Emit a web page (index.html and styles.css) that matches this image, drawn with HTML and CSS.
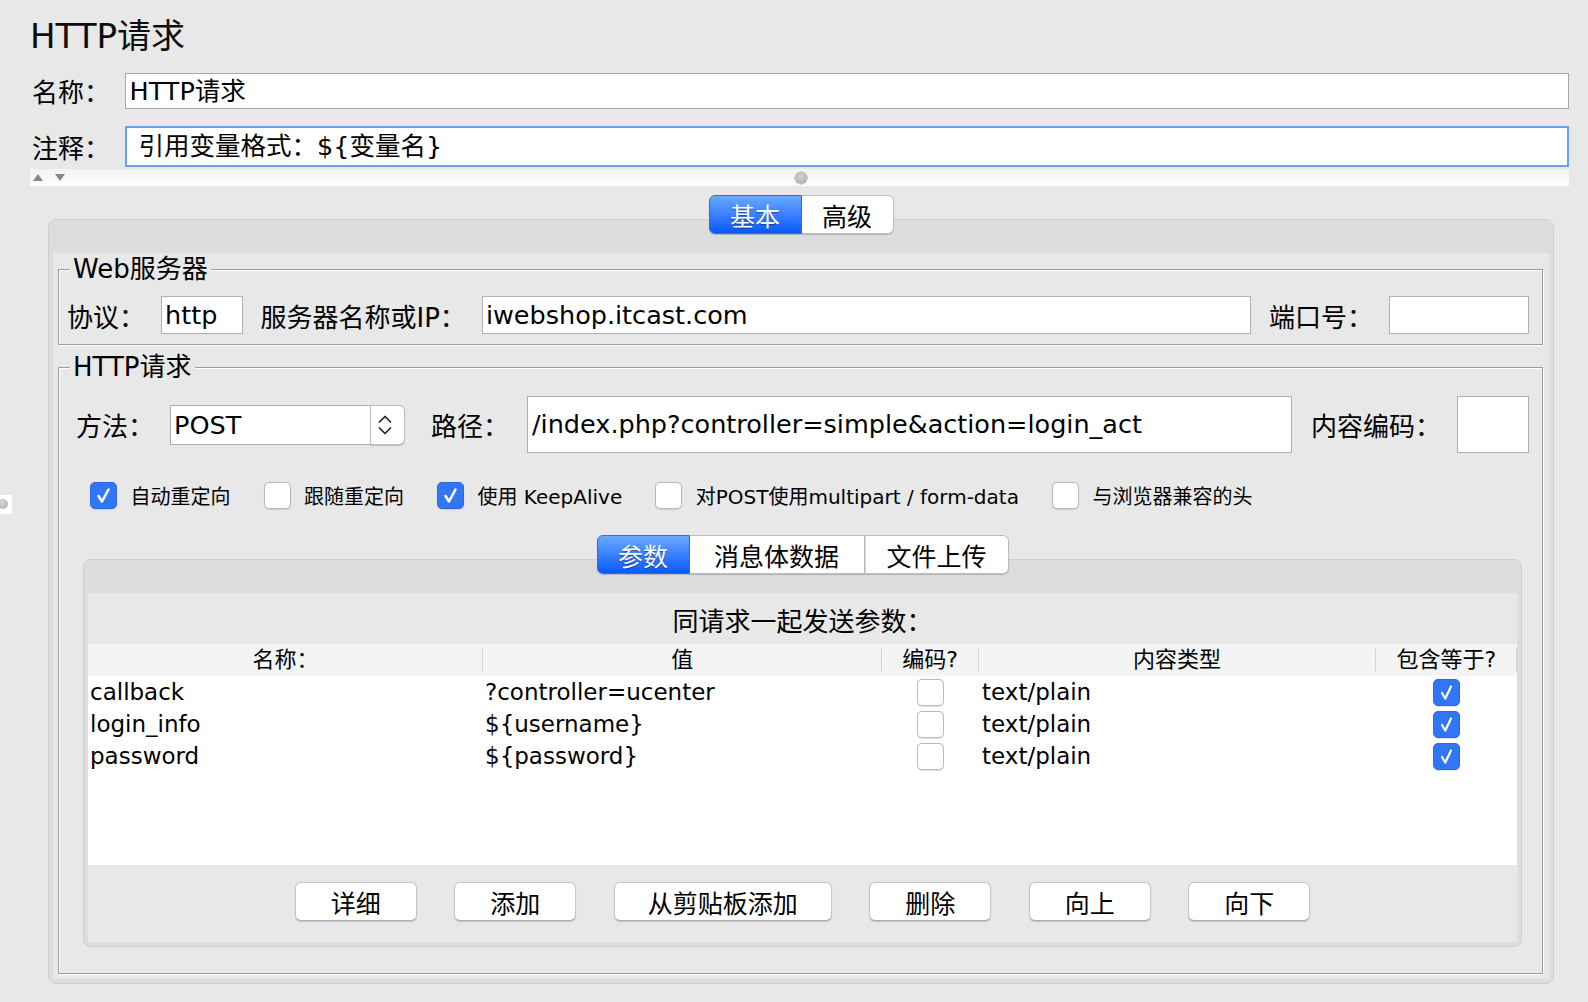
FILE: index.html
```html
<!DOCTYPE html>
<html lang="zh-CN">
<head>
<meta charset="utf-8">
<title>HTTP请求</title>
<link rel="stylesheet" href="styles.css">
</head>
<body>
<div class="lhandle"><span class="ldot"></span></div>

<div class="header">
  <h1 class="title">HTTP请求</h1>
  <div class="frow name-row">
    <span class="tlbl">名称：</span>
    <div class="tinput name-input">HTTP请求</div>
  </div>
  <div class="frow comment-row">
    <span class="tlbl">注释：</span>
    <div class="tinput comment-input">引用变量格式：${变量名}</div>
  </div>
  <div class="divider">
    <span class="tri up"></span>
    <span class="tri down"></span>
    <span class="knob"></span>
  </div>
</div>

<div class="tabpane outer">
  <div class="seg-tabs">
    <span class="seg active w93">基本</span><span class="seg w92">高级</span>
  </div>
  <div class="panel">
    <div class="pbody">
      <div class="tbox web">
        <span class="tbox-title">Web服务器</span>
        <div class="row row1">
          <span class="lbl">协议：</span>
          <div class="fld fld-proto">http</div>
          <span class="lbl">服务器名称或IP：</span>
          <div class="fld fld-server">iwebshop.itcast.com</div>
          <span class="lbl">端口号：</span>
          <div class="fld fld-port"></div>
        </div>
      </div>

      <div class="tbox http">
        <span class="tbox-title">HTTP请求</span>
        <div class="row row2">
          <span class="lbl">方法：</span>
          <div class="combo">
            <div class="combo-field">POST</div>
            <div class="combo-btn">
              <svg width="14" height="24" viewBox="0 0 14 24"><path d="M1.5 9 L7 3.5 L12.5 9" fill="none" stroke="#222" stroke-width="1.7" stroke-linecap="round" stroke-linejoin="round"/><path d="M1.5 15 L7 20.5 L12.5 15" fill="none" stroke="#222" stroke-width="1.7" stroke-linecap="round" stroke-linejoin="round"/></svg>
            </div>
          </div>
          <span class="lbl lbl-path">路径：</span>
          <div class="fld fld-path">/index.php?controller=simple&amp;action=login_act</div>
          <span class="lbl lbl-enc">内容编码：</span>
          <div class="fld fld-enc"></div>
        </div>

        <div class="checks">
          <span class="cb on"><svg width="27" height="27" viewBox="0 0 27 27"><path d="M8.5 14 L12 19.5 L18.5 7.5" fill="none" stroke="#fff" stroke-width="2.5" stroke-linecap="round" stroke-linejoin="round"/></svg></span>
          <span class="cbl">自动重定向</span>
          <span class="cb"></span>
          <span class="cbl">跟随重定向</span>
          <span class="cb on"><svg width="27" height="27" viewBox="0 0 27 27"><path d="M8.5 14 L12 19.5 L18.5 7.5" fill="none" stroke="#fff" stroke-width="2.5" stroke-linecap="round" stroke-linejoin="round"/></svg></span>
          <span class="cbl">使用 KeepAlive</span>
          <span class="cb"></span>
          <span class="cbl">对POST使用multipart / form-data</span>
          <span class="cb"></span>
          <span class="cbl">与浏览器兼容的头</span>
        </div>

        <div class="tabpane inner">
          <div class="seg-tabs">
            <span class="seg active w93">参数</span><span class="seg w175">消息体数据</span><span class="seg w144">文件上传</span>
          </div>
          <div class="panel">
            <div class="ibody">
              <div class="caption">同请求一起发送参数：</div>
              <div class="table">
                <div class="thead">
                  <span class="th">名称：</span>
                  <span class="th">值</span>
                  <span class="th">编码?</span>
                  <span class="th">内容类型</span>
                  <span class="th">包含等于?</span>
                </div>
                <div class="tr">
                  <span class="td">callback</span>
                  <span class="td">?controller=ucenter</span>
                  <span class="td c"><span class="cb"></span></span>
                  <span class="td ct">text/plain</span>
                  <span class="td c"><span class="cb on"><svg width="27" height="27" viewBox="0 0 27 27"><path d="M9 14 L12.3 19.5 L18 7.5" fill="none" stroke="#fff" stroke-width="2.2" stroke-linecap="round" stroke-linejoin="round"/></svg></span></span>
                </div>
                <div class="tr">
                  <span class="td">login_info</span>
                  <span class="td">${username}</span>
                  <span class="td c"><span class="cb"></span></span>
                  <span class="td ct">text/plain</span>
                  <span class="td c"><span class="cb on"><svg width="27" height="27" viewBox="0 0 27 27"><path d="M9 14 L12.3 19.5 L18 7.5" fill="none" stroke="#fff" stroke-width="2.2" stroke-linecap="round" stroke-linejoin="round"/></svg></span></span>
                </div>
                <div class="tr">
                  <span class="td">password</span>
                  <span class="td">${password}</span>
                  <span class="td c"><span class="cb"></span></span>
                  <span class="td ct">text/plain</span>
                  <span class="td c"><span class="cb on"><svg width="27" height="27" viewBox="0 0 27 27"><path d="M9 14 L12.3 19.5 L18 7.5" fill="none" stroke="#fff" stroke-width="2.2" stroke-linecap="round" stroke-linejoin="round"/></svg></span></span>
                </div>
              </div>
              <div class="btns">
                <span class="btn">详细</span>
                <span class="btn">添加</span>
                <span class="btn">从剪贴板添加</span>
                <span class="btn">删除</span>
                <span class="btn">向上</span>
                <span class="btn">向下</span>
              </div>
            </div>
          </div>
        </div>
      </div>
    </div>
  </div>
</div>
</body>
</html>
```

FILE: styles.css
```css
* { box-sizing: border-box; }
html, body { margin: 0; padding: 0; }
body {
  width: 1588px;
  height: 1002px;
  overflow: hidden;
  position: relative;
  background: #e8e8e8;
  color: #000;
  font-family: "DejaVu Sans", "Noto Sans CJK SC", sans-serif;
}

/* left split handle */
.lhandle {
  position: absolute;
  left: 0;
  top: 495px;
  width: 12px;
  height: 19px;
  background: #fff;
  overflow: hidden;
}
.ldot {
  position: absolute;
  left: -2px;
  top: 4px;
  width: 10px;
  height: 10px;
  border-radius: 50%;
  background: radial-gradient(circle at 40% 35%, #d8d8d8, #a9a9a9);
}

/* header */
.header { padding: 0 19px 0 30px; }
.title {
  margin: 0;
  padding-top: 17px;
  height: 55px;
  font-size: 34px;
  line-height: 38px;
  font-weight: normal;
  color: #0d0d0d;
}
.frow { display: flex; align-items: center; padding-left: 2px; }
.name-row { margin-top: 17px; }
.comment-row { margin-top: 17px; }
.tlbl { width: 92.5px; flex: none; font-size: 26px; }
.tinput {
  flex: 1;
  background: #fff;
  border: 1px solid #a8a8a8;
  font-size: 25.5px;
  white-space: nowrap;
}
.name-input { height: 36px; line-height: 34px; padding-left: 4px; }
.comment-input {
  height: 41px;
  line-height: 37px;
  padding-left: 12px;
  border: 2px solid #6b9fe8;
}
.divider {
  position: relative;
  height: 17px;
  margin-top: 2px;
  background: linear-gradient(#f3f3f3, #fdfdfd);
  display: flex;
  align-items: center;
}
.tri { width: 0; height: 0; border-left: 5px solid transparent; border-right: 5px solid transparent; }
.tri.up { border-bottom: 7px solid #888; margin-left: 3px; }
.tri.down { border-top: 7px solid #888; margin-left: 12px; }
.knob {
  position: absolute;
  left: 765px;
  top: 2.5px;
  width: 12px;
  height: 12px;
  border-radius: 50%;
  background: radial-gradient(circle at 45% 35%, #d2d2d2, #a6a6a6);
  box-shadow: 0 0 0 0.5px #9a9a9a;
}

/* segmented tabs */
.seg-tabs {
  position: relative;
  z-index: 2;
  display: flex;
  justify-content: center;
  height: 39px;
}
.seg {
  height: 39px;
  display: flex;
  align-items: center;
  justify-content: center;
  font-size: 25px;
  background: #fff;
  border: 1px solid #bdbdbd;
  border-left: 1px solid #d6d6d6;
  box-shadow: 0 1px 1px rgba(0, 0, 0, 0.18);
  color: #000;
}
.seg:first-child { border-left: 1px solid #bdbdbd; border-radius: 6px 0 0 6px; }
.seg:last-child { border-radius: 0 6px 6px 0; }
.seg.active {
  background: linear-gradient(#6ba8ff, #0a58ff);
  border-color: #2a6ef0;
  color: #fff;
  text-shadow: 0 1px 1px rgba(0, 0, 40, 0.45);
}
.seg.active + .seg { border-left: none; }
.w92 { width: 92px; }
.w93 { width: 93px; }
.w144 { width: 144px; }
.w175 { width: 175px; }

/* panels */
.outer { margin: 9px 34px 0 48px; }
.panel {
  margin-top: -15px;
  border: 1px solid #cecece;
  border-radius: 8px;
  background: #dddddd;
  padding: 33px 4px 4px;
}
.pbody {
  background: #e8e8e8;
  padding: 16px 6px 5px 5px;
}

/* titled boxes */
.tbox {
  border: 1px solid #9c9c9c;
  box-shadow: inset 1px 1px 0 #fff, 1px 1px 0 #fff;
}
.tbox-title {
  display: block;
  width: fit-content;
  margin: -16px 0 0 11px;
  padding: 0 3px;
  background: #e8e8e8;
  font-size: 26px;
  line-height: 30px;
}
.row { display: flex; align-items: center; }
.lbl { flex: none; font-size: 26px; white-space: nowrap; margin-right: 16px; }
.fld {
  flex: none;
  background: #fff;
  border: 1px solid #b0b0b0;
  font-size: 25.5px;
  white-space: nowrap;
  overflow: hidden;
  padding-left: 3px;
  margin-right: 17.5px;
}
.fld:last-child { margin-right: 0; }

.row1 { height: 38px; margin: 12px 0 10px; padding: 0 13px 0 8px; }
.row1 .fld { height: 38px; line-height: 36px; }
.fld-proto { width: 82px; }
.fld-server { flex: 1; }
.fld-port { width: 140px; }

.http { margin-top: 22px; padding-bottom: 26px; }
.row2 { height: 57px; margin-top: 14px; padding: 0 13px 0 17px; }
.row2 .fld { height: 57px; line-height: 55px; padding-left: 4px; }
.combo { flex: none; display: flex; width: 235px; height: 40px; margin-right: 26px; }
.combo-field {
  flex: 1;
  background: #fff;
  border: 1px solid #ababab;
  border-right: none;
  font-size: 25.5px;
  line-height: 38px;
  padding-left: 3px;
}
.combo-btn {
  width: 35px;
  background: #fff;
  border: 1px solid #bababa;
  border-radius: 0 6px 6px 0;
  box-shadow: 0 1px 1px rgba(0, 0, 0, 0.2);
  display: flex;
  align-items: center;
  justify-content: center;
  padding-right: 6px;
}
.lbl-path { margin-right: 18px; }
.fld-path { flex: 1; margin-right: 18.5px; }
.fld-enc { width: 72px; }

/* checkboxes */
.checks {
  display: flex;
  align-items: center;
  height: 28px;
  margin-top: 28px;
  padding-left: 31px;
  font-size: 20px;
}
.cb {
  flex: none;
  display: block;
  width: 27px;
  height: 27px;
  border-radius: 5px;
  background: #fff;
  border: 1px solid #b9b9b9;
  box-shadow: 0 0.5px 1px rgba(0, 0, 0, 0.12);
}
.cb svg { display: block; margin: -1px; }
.cb.on { background: #3177f5; border-color: #2a69e0; }
.checks .cb { margin-right: 13.5px; }
.cbl { margin-right: 33px; white-space: nowrap; }

/* inner tab pane */
.inner { margin: 26px 20px 0 24px; }
.ibody { background: #e8e8e8; }
.caption {
  height: 51px;
  padding-top: 1px;
  display: flex;
  align-items: center;
  justify-content: center;
  font-size: 26px;
}
.table { height: 221px; background: #fff; }
.thead, .tr {
  display: grid;
  grid-template-columns: 395px 398.5px 97px 397px 1fr;
}
.thead { height: 32px; background: #f4f4f4; font-size: 22px; }
.th {
  text-align: center;
  line-height: 32px;
  background: linear-gradient(#d2d2d2, #d2d2d2) right 5px / 1px 22px no-repeat;
}
.tr { height: 32px; align-items: center; font-size: 23px; }
.td { padding-left: 2px; white-space: nowrap; }
.td.ct { padding-left: 3.5px; }
.td.c { display: flex; justify-content: center; padding-left: 0; }

.btns {
  height: 77px;
  padding-top: 17px;
  display: flex;
  justify-content: center;
  align-items: flex-start;
  gap: 37.5px;
}
.btn {
  height: 39px;
  min-width: 122px;
  padding: 0 33px;
  display: flex;
  align-items: center;
  justify-content: center;
  background: #fff;
  border: 1px solid #c4c4c4;
  border-bottom-color: #b0b0b0;
  border-radius: 6px;
  box-shadow: 0 1px 1px rgba(0, 0, 0, 0.18);
  font-size: 25px;
}
```
